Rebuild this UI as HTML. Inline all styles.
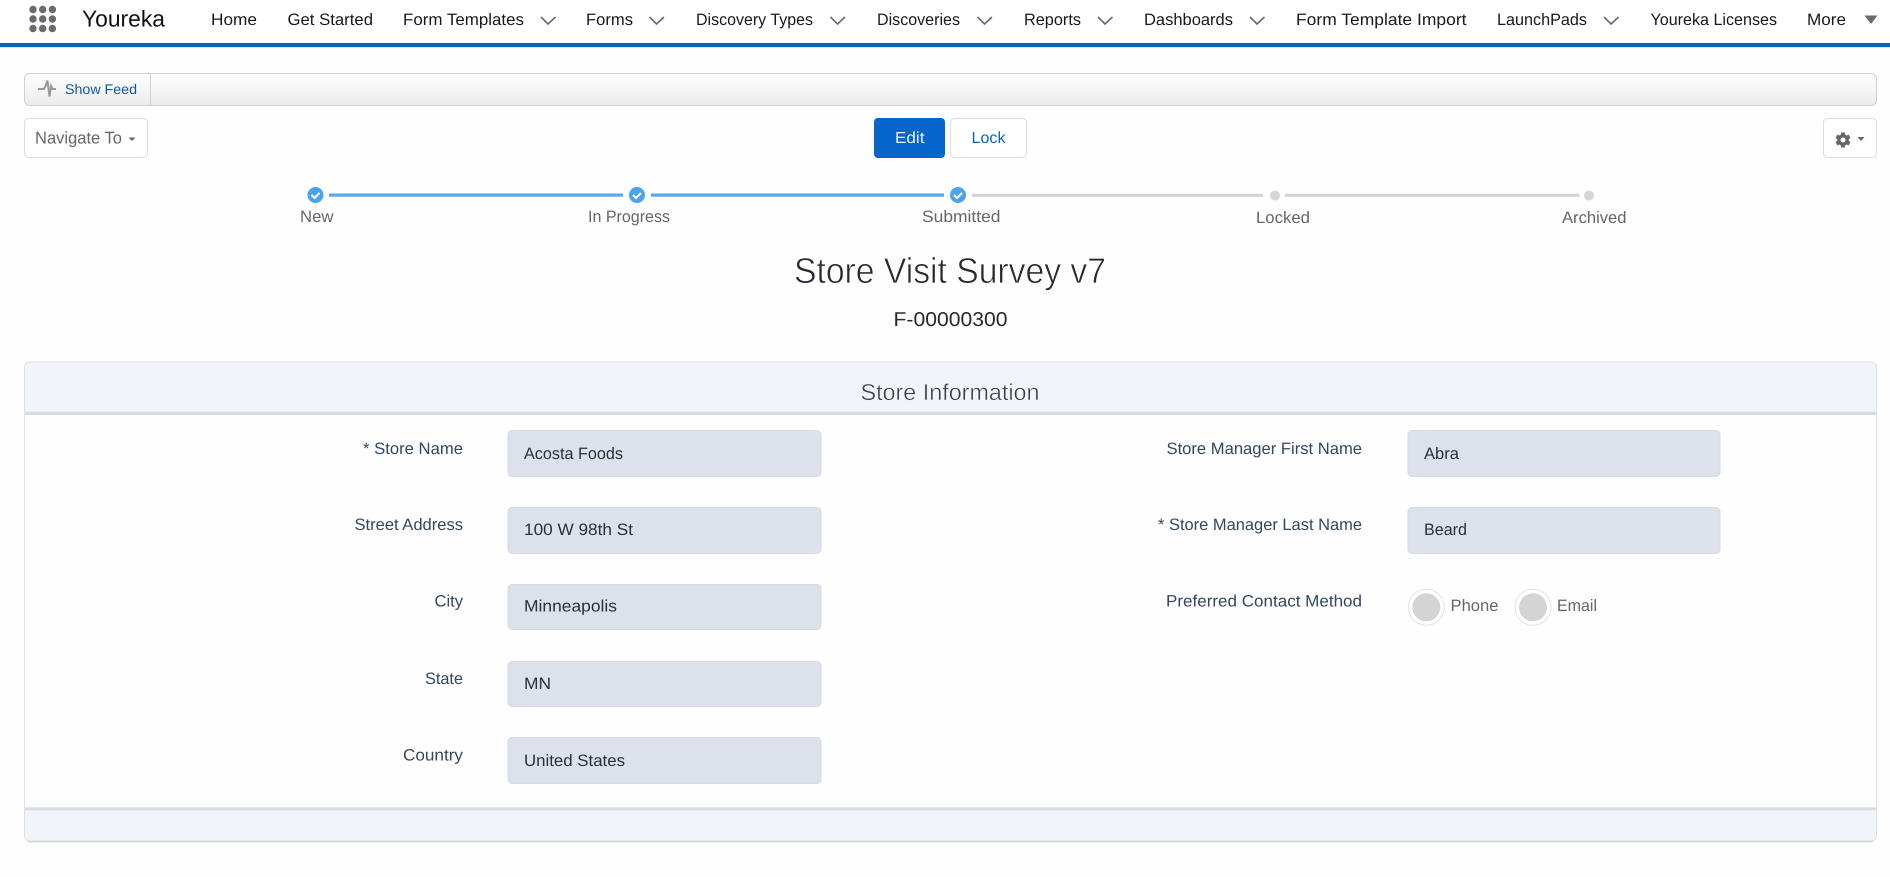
<!DOCTYPE html>
<html lang="en">
<head>
<meta charset="utf-8">
<title>Store Visit Survey v7</title>
<style>
html,body{margin:0;padding:0;background:#fefefe;width:1890px;height:877px;overflow:hidden}
svg{display:block}
text{font-family:"Liberation Sans",Arial,sans-serif;text-rendering:geometricPrecision}
.nav{font-size:16.5px;fill:#16191d}
.chev{fill:none;stroke:#6a6a6a;stroke-width:1.6}
.btn{fill:#fff;stroke:#d8dde6;stroke-width:1}
.step{font-size:16.5px;fill:#666}
.lab{font-size:16.5px;fill:#33475f}
.val{font-size:16.5px;fill:#2b3036}
.inp{fill:#dde1eb;stroke:#d8dbe3;stroke-width:1}
.ck{fill:none;stroke:#fff;stroke-width:2}
.thin{stroke:#fefefe;stroke-width:.7}
</style>
</head>
<body>
<svg xmlns="http://www.w3.org/2000/svg" width="1890" height="877" viewBox="0 0 1890 877">
<defs>
<linearGradient id="g" x1="0" y1="0" x2="0" y2="1"><stop offset="0" stop-color="#fff"/><stop offset="1" stop-color="#ebebed"/></linearGradient>
</defs>
<rect width="1890" height="877" fill="#fefefe"/>

<!-- nav -->
<rect width="1890" height="43" fill="#fff"/>
<rect y="43" width="1890" height="4" fill="#0a62bd"/>
<rect y="47" width="1890" height="1" fill="#d5e3f0"/>
<g fill="#6b6b6b">
<circle cx="33" cy="9.5" r="3.7"/><circle cx="42.7" cy="9.5" r="3.7"/><circle cx="52.4" cy="9.5" r="3.7"/>
<circle cx="33" cy="19" r="3.7"/><circle cx="42.7" cy="19" r="3.7"/><circle cx="52.4" cy="19" r="3.7"/>
<circle cx="33" cy="28.5" r="3.7"/><circle cx="42.7" cy="28.5" r="3.7"/><circle cx="52.4" cy="28.5" r="3.7"/>
</g>
<text x="82" y="26.5" font-size="23" fill="#111" textLength="83" lengthAdjust="spacingAndGlyphs">Youreka</text>
<text class="nav" x="211" y="25" textLength="46" lengthAdjust="spacingAndGlyphs">Home</text>
<text class="nav" x="287.5" y="25" textLength="85.5" lengthAdjust="spacingAndGlyphs">Get Started</text>
<text class="nav" x="403" y="25" textLength="121" lengthAdjust="spacingAndGlyphs">Form Templates</text>
<polyline class="chev" points="541,17 548,24 555.5,17"/>
<text class="nav" x="586" y="25" textLength="47" lengthAdjust="spacingAndGlyphs">Forms</text>
<polyline class="chev" points="649.5,17 656.5,24 664,17"/>
<text class="nav" x="696" y="25" textLength="117" lengthAdjust="spacingAndGlyphs">Discovery Types</text>
<polyline class="chev" points="830.5,17 837.5,24 845,17"/>
<text class="nav" x="877" y="25" textLength="83" lengthAdjust="spacingAndGlyphs">Discoveries</text>
<polyline class="chev" points="977.5,17 984.5,24 992,17"/>
<text class="nav" x="1024" y="25" textLength="57" lengthAdjust="spacingAndGlyphs">Reports</text>
<polyline class="chev" points="1098,17 1105,24 1112.5,17"/>
<text class="nav" x="1144" y="25" textLength="89" lengthAdjust="spacingAndGlyphs">Dashboards</text>
<polyline class="chev" points="1250,17 1257,24 1264.5,17"/>
<text class="nav" x="1296" y="25" textLength="170.5" lengthAdjust="spacingAndGlyphs">Form Template Import</text>
<text class="nav" x="1497" y="25" textLength="90" lengthAdjust="spacingAndGlyphs">LaunchPads</text>
<polyline class="chev" points="1604,17 1611,24 1618.5,17"/>
<text class="nav" x="1650.5" y="25" textLength="126.5" lengthAdjust="spacingAndGlyphs">Youreka Licenses</text>
<text class="nav" x="1807" y="25" textLength="39" lengthAdjust="spacingAndGlyphs">More</text>
<polygon points="1864.5,15.5 1877.5,15.5 1871,24" fill="#6a6a6a"/>

<!-- show feed bar -->
<rect x="24.5" y="73.5" width="1852" height="32" rx="5" fill="url(#g)" stroke="#d0d0d2"/>
<line x1="150.5" y1="74" x2="150.5" y2="105" stroke="#d2d2d4"/>
<path d="M38 89H44L45.500 86L47.500 80.500L49.500 96.500L51 86L52.500 89H56" fill="none" stroke="#999" stroke-width="2"/>
<text x="65" y="94" font-size="14" fill="#0f5ba0" textLength="72" lengthAdjust="spacingAndGlyphs">Show Feed</text>

<!-- buttons -->
<rect class="btn" x="24.5" y="118.5" width="123" height="39" rx="4"/>
<text x="35" y="143.5" font-size="17" fill="#666" textLength="87" lengthAdjust="spacingAndGlyphs">Navigate To</text>
<polygon points="128.5,137.5 135.5,137.5 132,141" fill="#666"/>
<rect x="874" y="118" width="71" height="40" rx="4" fill="#0766cc"/>
<text x="895" y="143" font-size="16" fill="#eef5fc" textLength="29.5" lengthAdjust="spacingAndGlyphs">Edit</text>
<rect class="btn" x="950.5" y="118.5" width="76" height="39" rx="4"/>
<text x="971.5" y="143" font-size="16" fill="#0b63bd" textLength="34" lengthAdjust="spacingAndGlyphs">Lock</text>
<rect class="btn" x="1823.5" y="118.5" width="53" height="39" rx="4"/>
<g fill="#666">
<g stroke="#666" stroke-width="4">
<line x1="1843" y1="132.500" x2="1843" y2="147.500"/>
<line x1="1836.500" y1="136.250" x2="1849.500" y2="143.750"/>
<line x1="1836.500" y1="143.750" x2="1849.500" y2="136.250"/>
</g>
<circle cx="1843" cy="140" r="5.800"/>
<circle cx="1843" cy="140" r="2.500" fill="#fff"/>
<polygon points="1857.500,137 1864.500,137 1861,141"/>
</g>

<!-- progress -->
<rect x="329" y="193.5" width="294" height="3.2" fill="#57a9ec"/>
<rect x="651" y="193.5" width="293" height="3.2" fill="#57a9ec"/>
<rect x="972" y="193.8" width="291" height="3" fill="#d4d4d6"/>
<rect x="1285" y="193.8" width="294.5" height="3" fill="#d4d4d6"/>
<circle cx="315.5" cy="195" r="8" fill="#4ba3ee"/><path class="ck" d="M311.5 195l3 3 5-5"/>
<circle cx="637" cy="195" r="8" fill="#4ba3ee"/><path class="ck" d="M633 195l3 3 5-5"/>
<circle cx="958" cy="195" r="8" fill="#4ba3ee"/><path class="ck" d="M954 195l3 3 5-5"/>
<circle cx="1275" cy="195.5" r="5" fill="#d6d6d6"/>
<circle cx="1589" cy="195.5" r="5" fill="#d6d6d6"/>
<text class="step" x="300" y="222" textLength="33.5" lengthAdjust="spacingAndGlyphs">New</text>
<text class="step" x="588" y="222" textLength="82" lengthAdjust="spacingAndGlyphs">In Progress</text>
<text class="step" x="922" y="222" textLength="78.5" lengthAdjust="spacingAndGlyphs">Submitted</text>
<text class="step" x="1256" y="223" textLength="54" lengthAdjust="spacingAndGlyphs">Locked</text>
<text class="step" x="1562" y="223" textLength="64.5" lengthAdjust="spacingAndGlyphs">Archived</text>

<!-- title -->
<text class="thin" x="794" y="283" font-size="36" fill="#26292e" textLength="312" lengthAdjust="spacingAndGlyphs">Store Visit Survey v7</text>
<text x="893.5" y="326" font-size="20" fill="#26292e" textLength="114" lengthAdjust="spacingAndGlyphs">F-00000300</text>

<!-- panel -->
<path d="M24.5 810V367a5 5 0 0 1 5-5H1871.500a5 5 0 0 1 5 5V836a5 5 0 0 1-5 5H29.500a5 5 0 0 1-5-5Z" fill="#fefefe" stroke="#dde1e9"/>
<path d="M25 412V367a4.500 4.500 0 0 1 4.500-4.500H1871.500a4.500 4.500 0 0 1 4.500 4.500V412Z" fill="#f1f4f9"/>
<rect x="25" y="411.700" width="1851" height="3.300" fill="#d6dbe6"/>
<path d="M25 810V836a4.500 4.500 0 0 0 4.500 4.500H1871.500a4.500 4.500 0 0 0 4.500-4.500V810Z" fill="#f1f4f9"/>
<rect x="25" y="807.300" width="1851" height="3" fill="#d6dbe6"/>
<line x1="28" y1="841.500" x2="1873" y2="841.500" stroke="#cfd2d7"/>
<line x1="28" y1="842.500" x2="1873" y2="842.500" stroke="#f0f0f1"/>
<text x="860.500" y="400" font-size="23" fill="#3a3d42" stroke="#f1f4f9" stroke-width=".45" textLength="179" lengthAdjust="spacingAndGlyphs">Store Information</text>

<!-- left col -->
<text class="lab" x="363" y="454" textLength="100" lengthAdjust="spacingAndGlyphs">* Store Name</text>
<rect class="inp" x="508" y="430.500" width="313" height="46" rx="4"/>
<text class="val" x="524" y="459" textLength="99" lengthAdjust="spacingAndGlyphs">Acosta Foods</text>
<text class="lab" x="354.500" y="530" textLength="108.500" lengthAdjust="spacingAndGlyphs">Street Address</text>
<rect class="inp" x="508" y="507.500" width="313" height="46" rx="4"/>
<text class="val" x="524" y="535" textLength="109" lengthAdjust="spacingAndGlyphs">100 W 98th St</text>
<text class="lab" x="434.500" y="606.500" textLength="28.500" lengthAdjust="spacingAndGlyphs">City</text>
<rect class="inp" x="508" y="584.500" width="313" height="45" rx="4"/>
<text class="val" x="524" y="611.500" textLength="93" lengthAdjust="spacingAndGlyphs">Minneapolis</text>
<text class="lab" x="425" y="684" textLength="38" lengthAdjust="spacingAndGlyphs">State</text>
<rect class="inp" x="508" y="661.500" width="313" height="45" rx="4"/>
<text class="val" x="524" y="689" textLength="27" lengthAdjust="spacingAndGlyphs">MN</text>
<text class="lab" x="403" y="760.500" textLength="60" lengthAdjust="spacingAndGlyphs">Country</text>
<rect class="inp" x="508" y="737.500" width="313" height="46" rx="4"/>
<text class="val" x="524" y="766" textLength="101" lengthAdjust="spacingAndGlyphs">United States</text>

<!-- right col -->
<text class="lab" x="1166.500" y="454" textLength="195.500" lengthAdjust="spacingAndGlyphs">Store Manager First Name</text>
<rect class="inp" x="1408" y="430.500" width="312" height="46" rx="4"/>
<text class="val" x="1424" y="459" textLength="35" lengthAdjust="spacingAndGlyphs">Abra</text>
<text class="lab" x="1158" y="530" textLength="204" lengthAdjust="spacingAndGlyphs">* Store Manager Last Name</text>
<rect class="inp" x="1408" y="507.500" width="312" height="46" rx="4"/>
<text class="val" x="1424" y="535" textLength="43" lengthAdjust="spacingAndGlyphs">Beard</text>
<text class="lab" x="1166" y="606.500" textLength="196" lengthAdjust="spacingAndGlyphs">Preferred Contact Method</text>
<circle cx="1426.300" cy="607.300" r="18" fill="#fff" stroke="#e2e2e2"/>
<circle cx="1426.300" cy="607.300" r="14" fill="#d4d4d4"/>
<text class="step" x="1450.500" y="611" textLength="48" lengthAdjust="spacingAndGlyphs">Phone</text>
<circle cx="1533" cy="607.300" r="18" fill="#fff" stroke="#e2e2e2"/>
<circle cx="1533" cy="607.300" r="14" fill="#d4d4d4"/>
<text class="step" x="1557" y="611" textLength="40" lengthAdjust="spacingAndGlyphs">Email</text>
</svg>
</body>
</html>
